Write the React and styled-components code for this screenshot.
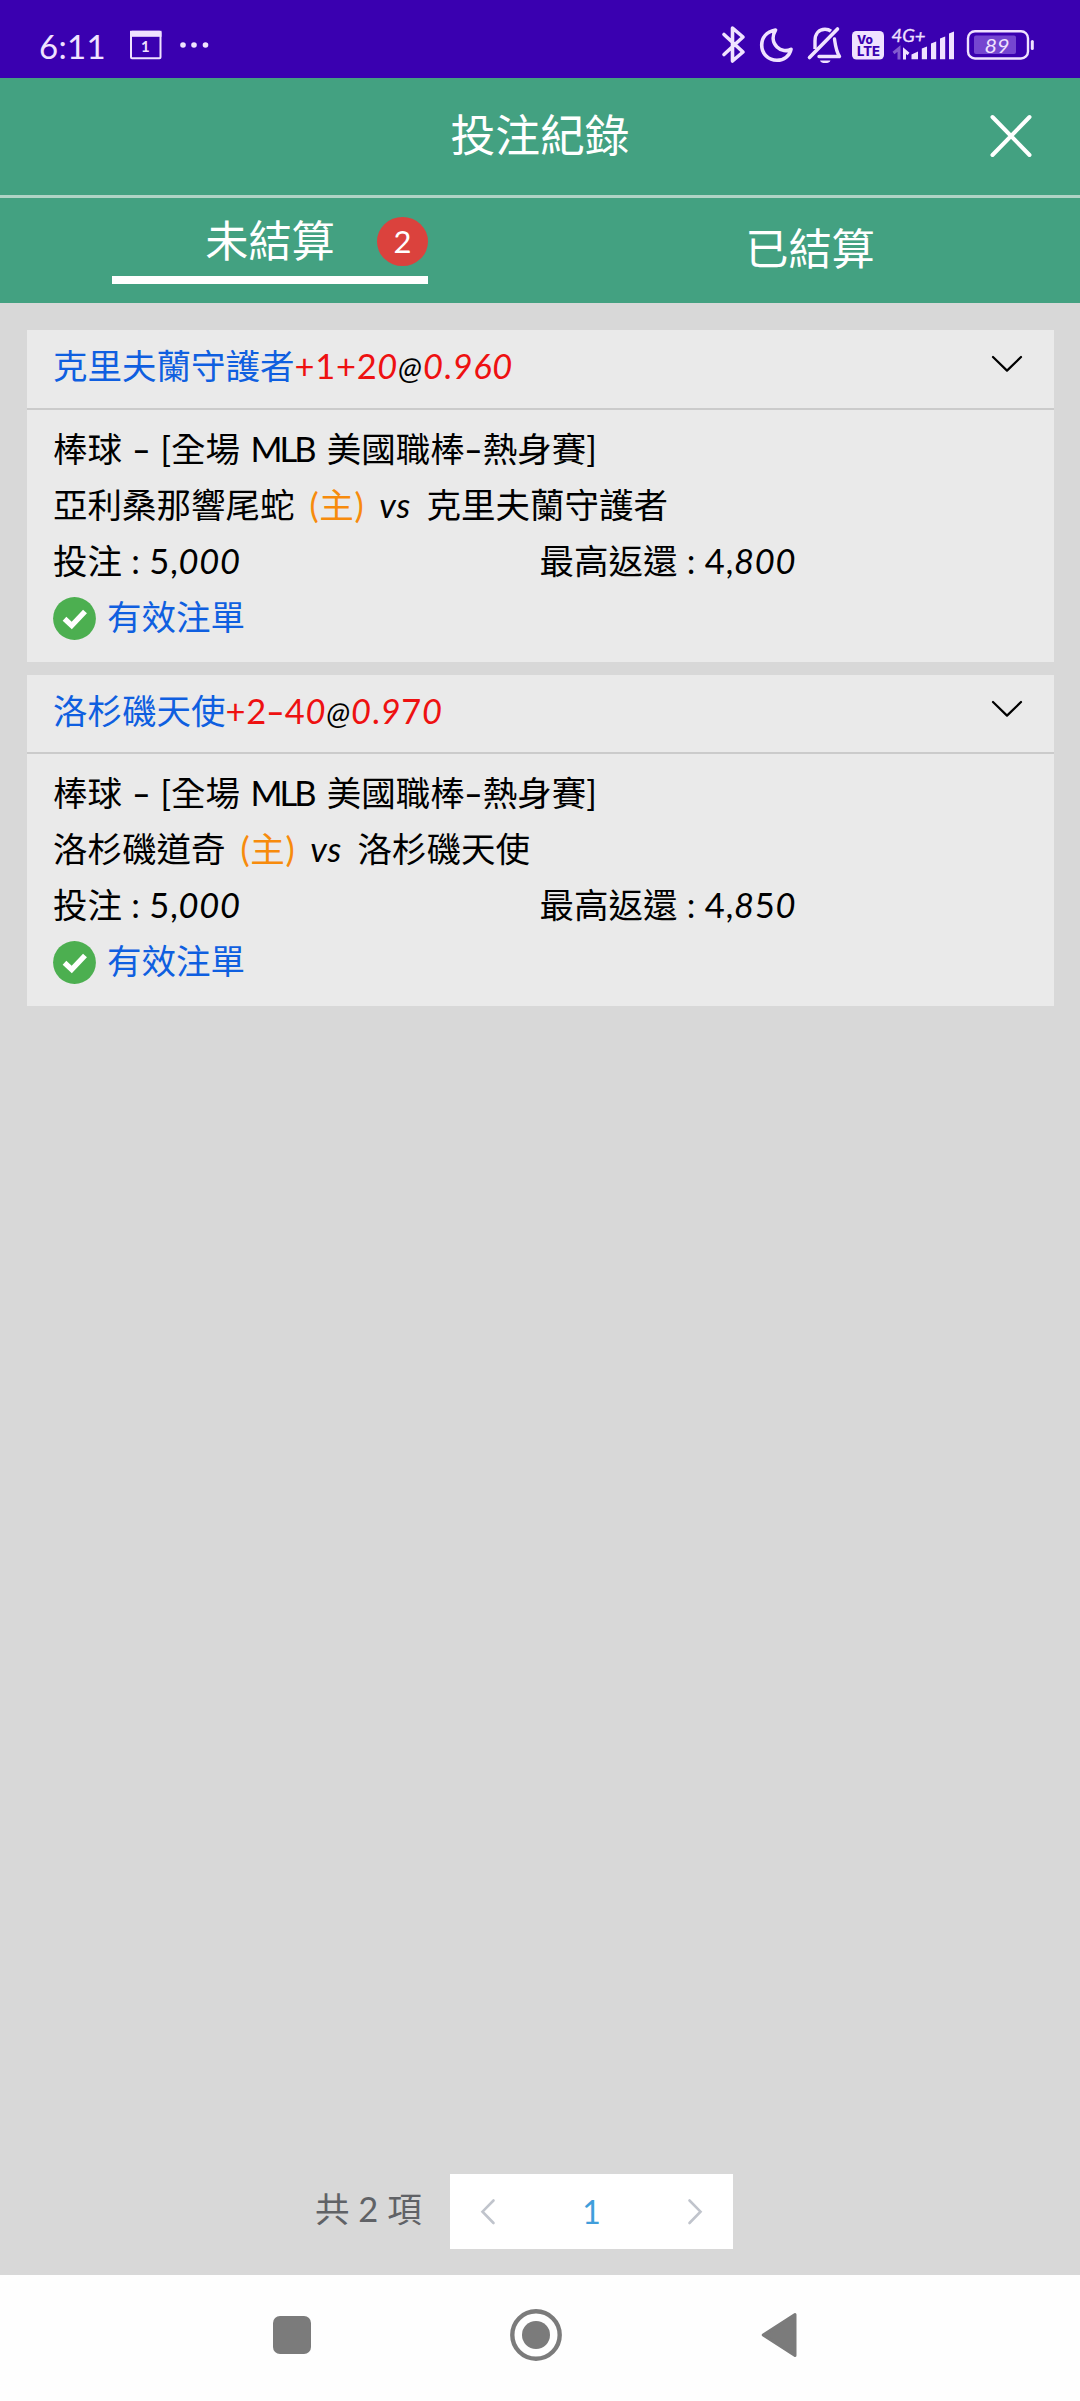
import React, { useState } from "react";
import styled, { createGlobalStyle } from "styled-components";

const bets = [
  {
    id: 1,
    pick: "克里夫蘭守護者",
    handicap: "+1+20",
    odds: "0.960",
    league: "美國職棒",
    stage: "熱身賽",
    home: "亞利桑那響尾蛇",
    away: "克里夫蘭守護者",
    stake: "5,000",
    payout: "4,800",
  },
  {
    id: 2,
    pick: "洛杉磯天使",
    handicap: "+2-40",
    odds: "0.970",
    league: "美國職棒",
    stage: "熱身賽",
    home: "洛杉磯道奇",
    away: "洛杉磯天使",
    stake: "5,000",
    payout: "4,850",
  },
];

// round digits lean, straight ones stay upright
function Digits({ children }) {
  return (
    <Num>
      {children.split(/([0689]+|-)/).map((part, i) => {
        if (part === "-") return <Dash key={i}>-</Dash>;
        return i % 2 ? <em key={i}>{part}</em> : part;
      })}
    </Num>
  );
}

function StatusIcons() {
  return (
    <svg width="320" height="78" viewBox="716 0 320 78" fill="none" stroke="#f0e2ff">
      {/* bluetooth */}
      <path d="M724 34.5 L743 52 L732.5 61 V28 L743 37 L724 54.5" strokeWidth="3.6" strokeLinejoin="round" strokeLinecap="round" />
      {/* moon */}
      <path d="M775.5 30 C766 32 761.7 38 761.7 45 C761.7 54 768.5 60.3 777 60.3 C784 60.3 789.5 56 791 49.3 C787 51.5 781 51 777 47 C772.5 42.5 772 36 775.5 30 Z" strokeWidth="3.6" strokeLinejoin="round" />
      {/* muted bell */}
      <path d="M815 49 V41 C815 33.5 819 29.3 825 29.3 C827.5 29.3 829.5 30 831 31.2" strokeWidth="3.4" />
      <path d="M834.5 39 C835.5 46 836 51 839.5 56.5 H819" strokeWidth="3.4" strokeLinecap="round" strokeLinejoin="round" />
      <path d="M809.5 57.5 L837.5 29" strokeWidth="3.6" strokeLinecap="round" />
      <path d="M820 60.5 h10.5 a5.4 3.4 0 0 1 -10.5 0 Z" fill="#f0e2ff" stroke="none" />
      {/* volte */}
      <rect x="852" y="31" width="32" height="28.5" rx="4.5" fill="#f0e2ff" stroke="none" />
      <g fill="#3a00b0" stroke="none" fontFamily="Inter, sans-serif" fontWeight="800">
        <text x="857" y="43.5" fontSize="12" textLength="16">Vo</text>
        <text x="857" y="56" fontSize="13" textLength="23" lengthAdjust="spacingAndGlyphs">LTE</text>
      </g>
      <text x="891.5" y="41.5" fontSize="17" fontStyle="italic" fontFamily="Lato, sans-serif" fill="#f0e2ff" stroke="#f0e2ff" strokeWidth=".3" textLength="34" lengthAdjust="spacingAndGlyphs">4G+</text>
      <path d="M893.5 53 L899 48.5 V59.5" strokeWidth="3" opacity=".4" />
      <path d="M904.5 59.5 V50.5 L908.5 54" strokeWidth="3" />
      {/* signal */}
      <g fill="#f0e2ff" stroke="none">
        <path d="M911.5 59.3 V54.5 L918 51.5 V59.3 Z" />
        <path d="M921.8 59.3 V48.5 L927 46.5 V59.3 Z" />
        <path d="M931 59.3 V43.5 L936.2 41.5 V59.3 Z" />
        <path d="M940 59.3 V38.5 L945.2 36.5 V59.3 Z" />
        <path d="M949 59.3 V33.5 L954 31.5 V59.3 Z" />
      </g>
      {/* battery */}
      <rect x="968" y="31.2" width="60" height="27.3" rx="7" strokeWidth="2.4" />
      <rect x="974" y="35.5" width="42" height="18.5" rx="2" fill="#7546d0" stroke="none" />
      <path d="M1032.3 41.5 V48.5" strokeWidth="3" strokeLinecap="round" />
      <text x="984.5" y="53.2" fontSize="20" fontStyle="italic" fontFamily="Lato, sans-serif" fill="#f0e2ff" stroke="none" textLength="25" lengthAdjust="spacingAndGlyphs">89</text>
    </svg>
  );
}

function BetCard({ bet }) {
  return (
    <Card>
      <CardHead>
        <span>
          <Pick>{bet.pick}</Pick>
          <Odds><Digits>{bet.handicap}</Digits></Odds>
          <At>@</At>
          <Odds><Digits>{bet.odds}</Digits></Odds>
        </span>
        <svg width="32" height="18" viewBox="0 0 32 18" fill="none" stroke="#000" strokeWidth="2.2" strokeLinecap="round" strokeLinejoin="round">
          <path d="M2 2 L16 15.6 L30 2" />
        </svg>
      </CardHead>
      <CardBody>
        <Line $space={1.5}>
          棒球 <Dash>-</Dash> [全場 <Latin>MLB</Latin> {bet.league}<Dash>-</Dash>{bet.stage}]
        </Line>
        <Line $space={6.2}>
          {bet.home} <Home>(主)</Home> <Versus>vs</Versus> {bet.away}
        </Line>
        <Amounts>
          <Line $space={0.5}>投注 : <Digits>{bet.stake}</Digits></Line>
          <Line $space={0.5}>最高返還 : <Digits>{bet.payout}</Digits></Line>
        </Amounts>
        <Status>
          <svg width="43" height="43" viewBox="0 0 43 43">
            <circle cx="21.5" cy="21.5" r="21.4" fill="#4caf50" />
            <path d="M11.5 21.8 L18.7 28.5 L32 14.5" fill="none" stroke="#fff" strokeWidth="5.4" />
          </svg>
          <span>有效注單</span>
        </Status>
      </CardBody>
    </Card>
  );
}

export default function App() {
  const [tab, setTab] = useState("open");

  return (
    <>
      <GlobalStyle />
      <Phone>
        <StatusBar>
          <Left>
            <Clock>6:11</Clock>
            <svg width="80" height="30" viewBox="0 0 80 30">
              <rect x="1" y="1.8" width="29.5" height="26.5" rx="1" fill="none" stroke="#f0e2ff" strokeWidth="2" />
              <rect x="0" y="0.8" width="31.5" height="6" fill="#f0e2ff" />
              <text x="11" y="22.3" fontFamily="Lato, sans-serif" fontSize="15" fontWeight="700" fill="#f0e2ff">1</text>
              <circle cx="53" cy="15" r="2.8" fill="#f0e2ff" />
              <circle cx="64" cy="15" r="2.8" fill="#f0e2ff" />
              <circle cx="75.5" cy="15" r="2.8" fill="#f0e2ff" />
            </svg>
          </Left>
          <StatusIcons />
        </StatusBar>

        <Header>
          <h1>投注紀錄</h1>
          <Close aria-label="close">
            <svg width="44" height="44" viewBox="0 0 44 44" stroke="#fff" strokeWidth="4" strokeLinecap="round">
              <path d="M3.5 3 L40.5 41 M40.5 3 L3.5 41" />
            </svg>
          </Close>
        </Header>

        <Tabs>
          <Tab $active={tab === "open"} onClick={() => setTab("open")}>
            <TabLabel $active={tab === "open"}>
              未結算
              <Badge>2</Badge>
            </TabLabel>
          </Tab>
          <Tab $active={tab === "settled"} onClick={() => setTab("settled")}>
            <TabLabel $active={tab === "settled"}>已結算</TabLabel>
          </Tab>
        </Tabs>

        <Content>
          {bets.map((bet) => (
            <BetCard key={bet.id} bet={bet} />
          ))}
        </Content>

        <Pagination>
          <Total>共 2 項</Total>
          <Pager>
            <svg width="16" height="28" viewBox="0 0 16 28" fill="none" stroke="#c0c4cc" strokeWidth="2.6" strokeLinecap="round">
              <path d="M13.5 2.5 L2.5 13.7 L13.5 25" />
            </svg>
            <span>1</span>
            <svg width="16" height="28" viewBox="0 0 16 28" fill="none" stroke="#c0c4cc" strokeWidth="2.6" strokeLinecap="round">
              <path d="M2.5 2.5 L13.5 13.7 L2.5 25" />
            </svg>
          </Pager>
        </Pagination>

        <NavBar>
          <svg width="38" height="38"><rect width="38" height="38" rx="7" fill="#7b7b7b" /></svg>
          <svg width="52" height="52">
            <circle cx="26" cy="26" r="23.7" fill="none" stroke="#7b7b7b" strokeWidth="4.4" />
            <circle cx="26" cy="26" r="14" fill="#7b7b7b" />
          </svg>
          <svg width="36" height="46" viewBox="0 0 36 46">
            <path d="M2.2 23 L34 2.6 V43.4 Z" fill="#7b7b7b" stroke="#7b7b7b" strokeWidth="3" strokeLinejoin="round" />
          </svg>
        </NavBar>
      </Phone>
    </>
  );
}

const GlobalStyle = createGlobalStyle`
  * {
    box-sizing: border-box;
  }
  body {
    margin: 0;
    font-family: Lato, "Noto Sans CJK TC", sans-serif;
    font-weight: 400;
    background: #d8d8d8;
  }
  svg {
    display: block;
    flex-shrink: 0;
  }
`;

const Phone = styled.div`
  width: 1080px;
  height: 2401px;
  display: flex;
  flex-direction: column;
  overflow: hidden;
  background: #d8d8d8;
`;

const StatusBar = styled.div`
  height: 78px;
  flex-shrink: 0;
  display: flex;
  justify-content: space-between;
  padding: 0 44px 0 39px;
  background: #3a00b0;
`;

const Left = styled.div`
  display: flex;
  align-items: center;
  padding-top: 12px;
`;

const Clock = styled.span`
  width: 91px;
  font-size: 33px;
  line-height: 34px;
  letter-spacing: 0.3px;
  color: #f0e2ff;
  padding-top: 2px;
`;

const Header = styled.header`
  height: 120px;
  flex-shrink: 0;
  display: grid;
  grid-template-columns: 1fr auto 1fr;
  align-items: center;
  padding: 0 47px 4px;
  background: #43a181;
  border-bottom: 3px solid #b0d4c6;
  h1 {
    grid-column: 2;
    margin: 0;
    font-size: 44.8px;
    line-height: 60px;
    font-weight: 400;
    color: #fff;
  }
`;

const Close = styled.button`
  justify-self: end;
  padding: 0;
  margin-top: 3px;
  border: 0;
  background: none;
`;

const Tabs = styled.nav`
  height: 105px;
  flex-shrink: 0;
  display: grid;
  grid-template-columns: 1fr 1fr;
  background: #43a181;
`;

const Tab = styled.div`
  display: flex;
  justify-content: center;
  align-items: flex-start;
  padding-top: ${(p) => (p.$active ? "7px" : "15px")};
`;

const TabLabel = styled.div`
  position: relative;
  width: 316px;
  height: 79px;
  text-align: center;
  font-size: 43.2px;
  line-height: 70px;
  color: #fff;
  border-bottom: ${(p) => (p.$active ? "8.5px solid #fff" : "0")};
`;

const Badge = styled.span`
  position: absolute;
  right: 0;
  top: 12px;
  width: 51px;
  height: 49px;
  border-radius: 50%;
  background: #db423d;
  font-size: 31px;
  line-height: 49px;
`;

const Content = styled.main`
  flex: 1;
  display: flex;
  flex-direction: column;
  gap: 13px;
  padding: 27px 26.5px 0;
`;

const Card = styled.section`
  height: 331.5px;
  background: #eaeaea;
`;

const CardHead = styled.div`
  height: 79.5px;
  display: flex;
  align-items: flex-start;
  justify-content: space-between;
  padding: 8px 30.5px 0 26.5px;
  border-bottom: 2.5px solid #cbcbcb;
  font-size: 34.5px;
  line-height: 56px;
  svg {
    margin-top: 17px;
  }
`;

const Pick = styled.span`
  color: #0f5fe0;
`;

const Odds = styled.span`
  color: #ee1111;
`;

const At = styled.em`
  margin-right: 1px;
  font-size: 31px;
`;

const Num = styled.span`
  letter-spacing: 0.7px;
  em {
    font-style: italic;
  }
`;

const Dash = styled.span`
  display: inline-block;
  margin: 0 2.5px;
  letter-spacing: 0;
  transform: scaleX(1.5);
`;

const Latin = styled.span`
  letter-spacing: -3px;
  margin-right: 3px;
`;

const CardBody = styled.div`
  padding: 11px 26.5px 0;
`;

const Line = styled.div`
  font-size: 34.5px;
  line-height: 56px;
  height: 56px;
  white-space: nowrap;
  word-spacing: ${(p) => p.$space}px;
`;

const Home = styled.span`
  letter-spacing: 0.6px;
  color: #f78b0c;
`;

const Versus = styled.em`
  letter-spacing: 1px;
`;

const Amounts = styled.div`
  display: grid;
  grid-template-columns: 486.5px 1fr;
`;

const Status = styled.div`
  display: flex;
  align-items: center;
  gap: 11px;
  height: 56px;
  font-size: 34.5px;
  line-height: 56px;
  color: #0f5fe0;
  svg {
    margin-top: 3px;
  }
`;

const Pagination = styled.footer`
  display: flex;
  align-items: center;
  height: 75px;
  margin-bottom: 26px;
  padding-left: 315px;
  color: #606266;
`;

const Total = styled.span`
  width: 135px;
  font-size: 34.5px;
  line-height: 60px;
  padding-bottom: 6px;
`;

const Pager = styled.div`
  width: 283px;
  height: 75px;
  display: flex;
  align-items: center;
  justify-content: space-between;
  padding: 0 30px;
  background: #fff;
  color: #409edb;
  font-size: 32px;
`;

const NavBar = styled.div`
  height: 126px;
  flex-shrink: 0;
  display: flex;
  align-items: center;
  justify-content: space-between;
  padding: 0 283px 7px 273px;
  background: #fefefe;
`;
